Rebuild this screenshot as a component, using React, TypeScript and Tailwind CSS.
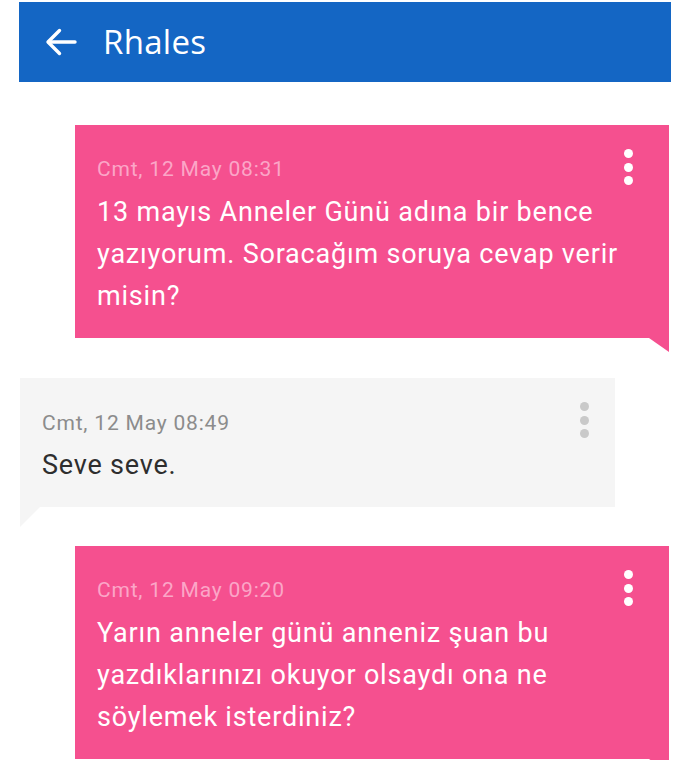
import React from "react";

type Msg = { time: string; text: string; mine: boolean };

const messages: Msg[] = [
  {
    time: "Cmt, 12 May 08:31",
    text: "13 mayıs Anneler Günü adına bir bence yazıyorum. Soracağım soruya cevap verir misin?",
    mine: true,
  },
  { time: "Cmt, 12 May 08:49", text: "Seve seve.", mine: false },
  {
    time: "Cmt, 12 May 09:20",
    text: "Yarın anneler günü anneniz şuan bu yazdıklarınızı okuyor olsaydı ona ne söylemek isterdiniz?",
    mine: true,
  },
];

const BackArrow = () => (
  <svg width="32" height="28" viewBox="0 0 32 28" fill="none">
    <path d="M30 14H4" stroke="white" strokeWidth="3.4" strokeLinecap="round" />
    <path d="M14.5 2.5 3 14l11.5 11.5" stroke="white" strokeWidth="3.4" strokeLinecap="round" strokeLinejoin="round" />
  </svg>
);

const Dots = ({ light }: { light: boolean }) => (
  <div className="flex flex-col gap-[4.5px] pt-[24px]">
    <span className={`w-[9px] h-[9px] rounded-full ${light ? "bg-white" : "bg-[#c9c9c9]"}`} />
    <span className={`w-[9px] h-[9px] rounded-full ${light ? "bg-white" : "bg-[#c9c9c9]"}`} />
    <span className={`w-[9px] h-[9px] rounded-full ${light ? "bg-white" : "bg-[#c9c9c9]"}`} />
  </div>
);

const Bubble = ({ msg }: { msg: Msg }) => {
  if (msg.mine) {
    return (
      <div className="relative ml-[56px] mr-[2px] bg-[#f5508f] flex">
        <div className="flex-1 pl-[22px] pt-[30px] pb-[21px]">
          <div className="text-[21px] leading-[28px] tracking-[0.8px] text-[#fba6c7]">{msg.time}</div>
          <div className="mt-[8px] text-[27px] leading-[42px] tracking-[0.8px] text-white">{msg.text}</div>
        </div>
        <div className="pr-[36px]">
          <Dots light />
        </div>
        <svg className="absolute right-0 top-full" width="20" height="14" viewBox="0 0 20 14">
          <path d="M0 0H20V14Z" fill="#f5508f" />
        </svg>
      </div>
    );
  }
  return (
    <div className="relative ml-[1px] w-[595px] bg-[#f5f5f5] flex">
      <div className="flex-1 pl-[22px] pt-[31px] pb-[21px]">
        <div className="text-[21px] leading-[28px] tracking-[0.8px] text-[#8c8c8c]">{msg.time}</div>
        <div className="mt-[7px] text-[27px] leading-[42px] tracking-[0.8px] text-[#2e2e2e]">{msg.text}</div>
      </div>
      <div className="pr-[26px]">
        <Dots light={false} />
      </div>
      <svg className="absolute left-0 top-full" width="20" height="20" viewBox="0 0 20 20">
        <path d="M0 0H20L0 20Z" fill="#f5f5f5" />
      </svg>
    </div>
  );
};

export default function App() {
  return (
    <div className="w-[690px] h-[760px] overflow-hidden bg-white pt-[2px] px-[19px] font-['Roboto',sans-serif]">
      <div className="h-[80px] bg-[#1466c4] flex items-center pl-[26px]">
        <BackArrow />
        <span className="ml-[26px] text-[33px] text-white font-['Open_Sans',sans-serif] tracking-[0.3px]">Rhales</span>
      </div>

      <div className="flex flex-col">
        <div className="mt-[43px]">
          <Bubble msg={messages[0]} />
        </div>
        <div className="mt-[40px]">
          <Bubble msg={messages[1]} />
        </div>
        <div className="mt-[39px]">
          <Bubble msg={messages[2]} />
        </div>
      </div>
    </div>
  );
}
